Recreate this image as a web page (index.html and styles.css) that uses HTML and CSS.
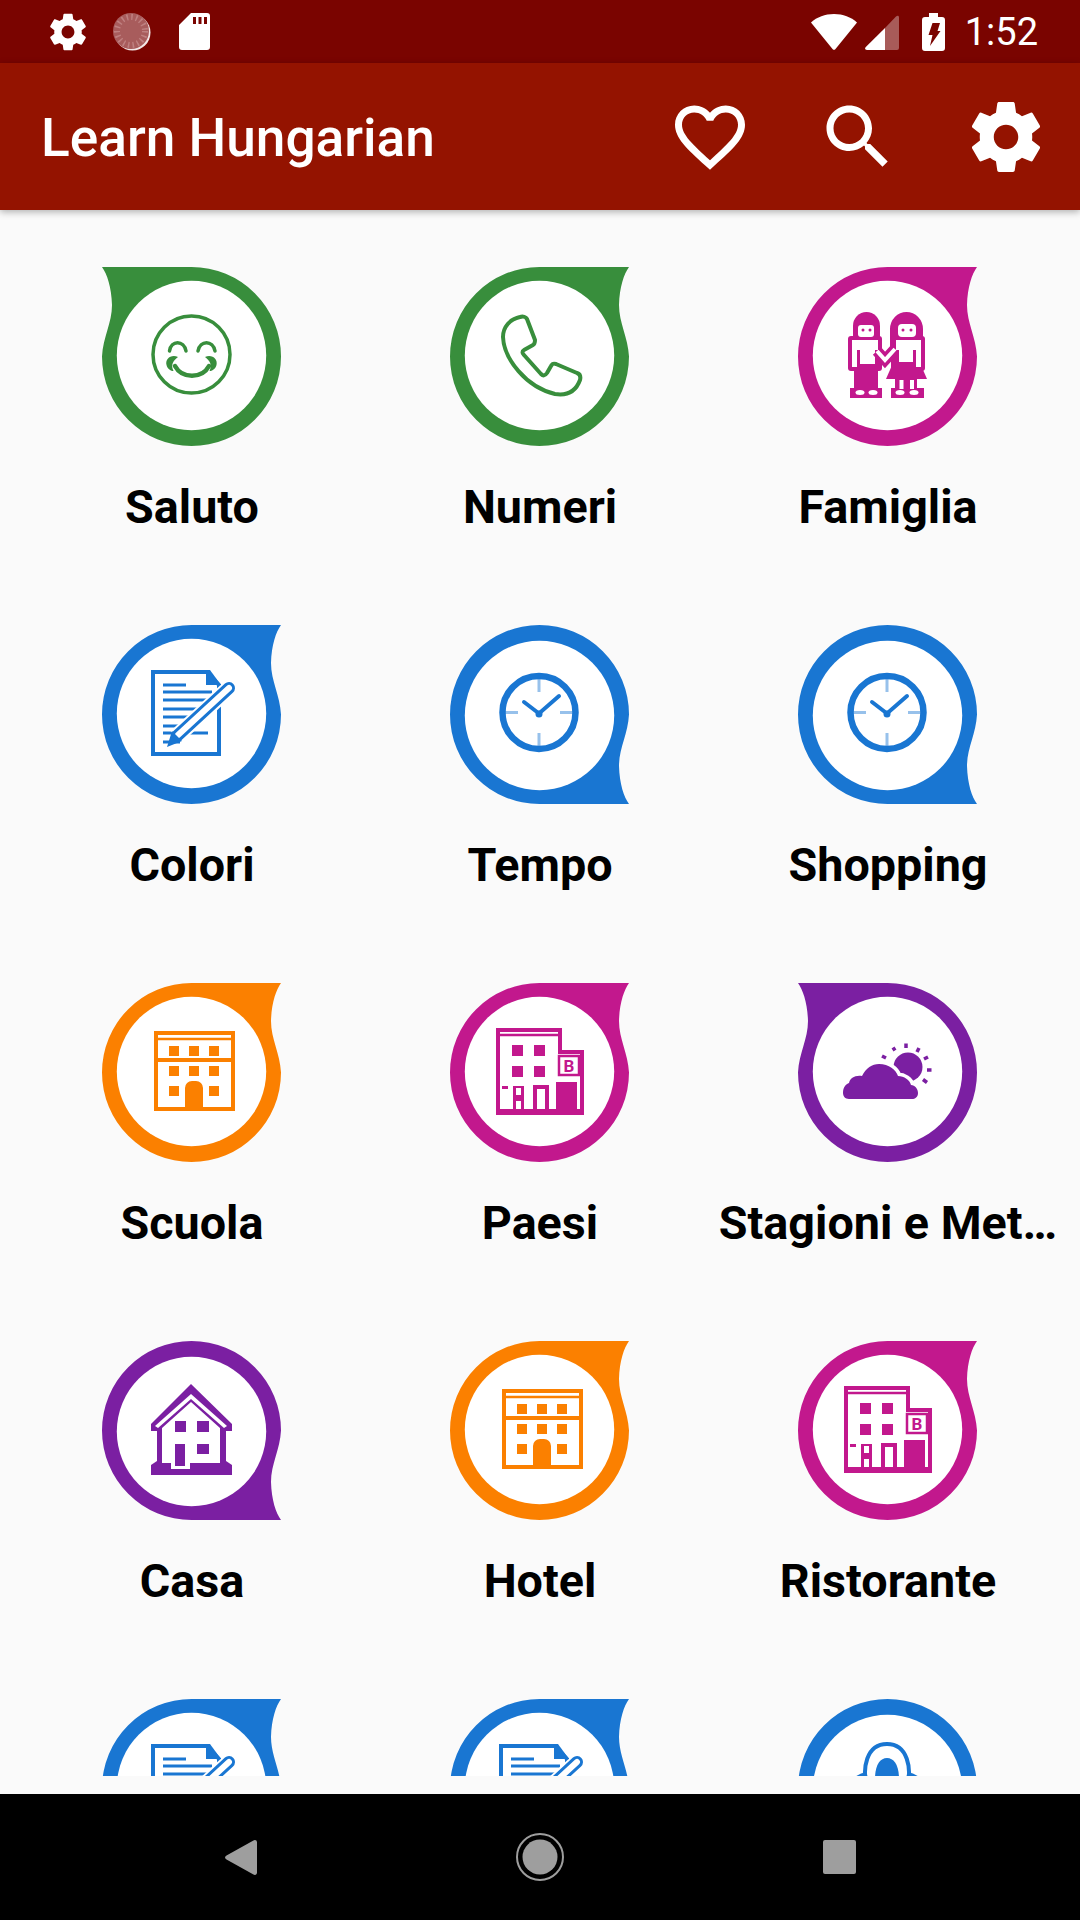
FILE: index.html
```html
<!DOCTYPE html>
<html lang="en">
<head>
    <meta charset="UTF-8">
    <meta name="viewport" content="width=device-width, initial-scale=1.0">
    <title>Learn Hungarian</title>
    <link rel="stylesheet" href="styles.css">
</head>
<body>
    <!-- shared shapes for the tiles -->
    <svg class="sprite" xmlns="http://www.w3.org/2000/svg">
        <defs>
            <g id="drop-tr">
                <path fill="currentColor" d="M89.5 0H179C174 7 169.5 20 169 38C169 56 178 70 179 89.5A89.5 89.5 0 1 1 89.5 0Z"/>
                <circle cx="89.5" cy="88.5" r="74.7" fill="#fff"/>
            </g>
            <use id="drop-tl" href="#drop-tr" transform="matrix(-1 0 0 1 179 0)"/>
            <use id="drop-br" href="#drop-tr" transform="matrix(1 0 0 -1 0 179)"/>

            <g id="g-smile" fill="none" stroke="currentColor" stroke-width="3.5" stroke-linecap="round">
                <circle cx="89.5" cy="87.5" r="38.5"/>
                <path d="M67.500 84C69 73 82 73 84 84M96 84C98 73 111 73 113 84"/>
                <path stroke-width="4.500" d="M73 99C80 112 100 112 107 99"/>
                <path fill="currentColor" stroke="none" d="M76 90C69 87 63 92 64.500 98C65.500 102 69 104 71.500 104C68.500 98 71 94 76 90ZM103 90C110 87 116 92 114.500 98C113.500 102 110 104 107.500 104C110.500 98 108 94 103 90Z"/>
            </g>

            <path id="g-phone" fill="none" stroke="currentColor" stroke-width="4" stroke-linejoin="round" d="M70 50C60 52 53 60 53 70C54 92 76 120 105 127C118 129 126 124 130 113C131 109 130 107 127 106L106 97C103 96 102 97 101 99L97 106C95 109 93 109 91 107L74 88C72 86 72 84 74 83L83 78C85 77 85 75 85 73L77 52C76 50 73 49 70 50Z"/>

            <g id="g-family">
                <g fill="currentColor">
                    <path d="M55 72V59A13.5 14 0 0 1 82 59V72Z"/>
                    <path d="M92 82V62A16.5 17 0 0 1 125 62V82Z"/>
                    <rect x="50" y="69" width="34" height="35" rx="3"/>
                    <rect x="93" y="69" width="34" height="35" rx="3"/>
                    <rect x="56" y="98" width="24" height="24"/>
                    <path d="M95 96H122L129 112H88Z"/>
                    <rect x="97" y="110" width="22" height="12"/>
                    <rect x="52" y="121" width="32" height="10"/>
                    <rect x="93" y="121" width="33" height="10"/>
                </g>
                <g fill="#fff">
                    <rect x="60" y="58" width="16" height="12" rx="3"/>
                    <rect x="100" y="57" width="18" height="13" rx="4"/>
                    <path d="M54 73H80V83H77V97H62V83H59V100H54Z"/>
                    <path d="M98 73H123V100H118V83H115V95H101V83H98Z"/>
                    <rect x="101.5" y="113" width="4" height="9"/>
                    <rect x="112" y="113" width="4" height="9"/>
                    <ellipse cx="62" cy="125.5" rx="4.5" ry="2.5"/>
                    <ellipse cx="75" cy="125.5" rx="4.5" ry="2.5"/>
                    <ellipse cx="102" cy="125.5" rx="4.5" ry="2.5"/>
                    <ellipse cx="116" cy="125.5" rx="4.5" ry="2.5"/>
                </g>
                <g fill="currentColor">
                    <circle cx="65" cy="63" r="1.5"/>
                    <circle cx="72" cy="63" r="1.5"/>
                    <circle cx="105" cy="63" r="1.5"/>
                    <circle cx="113" cy="63" r="1.5"/>
                </g>
                <path fill="none" stroke="currentColor" stroke-width="11" d="M79 84L87 93L97 82"/>
                <path fill="none" stroke="#fff" stroke-width="4" d="M79 84L87 93L97 82"/>
            </g>

            <g id="g-note">
                <path fill="#fff" stroke="currentColor" stroke-width="4" d="M51 47H105L117 60V129H51Z"/>
                <path fill="currentColor" d="M104 45H108L119 60H104Z"/>
                <path fill="none" stroke="currentColor" stroke-width="3" d="M61 60H84M61 67H110M61 75H110M61 84H105M61 92H100M61 101H96M61 108H106M61 117H78"/>
                <path fill="none" stroke="#fff" stroke-width="16" d="M74 112L124 66"/>
                <path fill="none" stroke="currentColor" stroke-width="12" stroke-linecap="round" d="M75 111L127 63"/>
                <path fill="none" stroke="#fff" stroke-width="6" stroke-linecap="round" d="M76 110L127 63"/>
                <path fill="currentColor" d="M65 122L70 106L80 116Z"/>
            </g>

            <g id="g-clock" stroke="currentColor" fill="none">
                <circle cx="89" cy="87.5" r="36.5" stroke-width="6.5"/>
                <path stroke-width="3" opacity="0.45" d="M89 52V67M89 108V122M54 87.5H68M110 87.5H125"/>
                <path stroke-width="4" stroke-linecap="round" d="M74 77L89 88.5L109 71"/>
                <circle cx="89" cy="89" r="3.5" fill="currentColor" stroke="none"/>
            </g>

            <g id="g-school">
                <rect x="54" y="50" width="77" height="76" fill="none" stroke="currentColor" stroke-width="4"/>
                <path fill="none" stroke="currentColor" d="M52 56H133" stroke-width="2.5"/>
                <path fill="none" stroke="currentColor" d="M52 77H133" stroke-width="4"/>
                <path fill="currentColor" d="M67 63H77V73H67ZM87 63H97V73H87ZM107 63H117V73H107ZM67 83H77V93H67ZM87 83H97V93H87ZM107 83H117V93H107ZM67 103H77V113H67ZM107 103H117V113H107ZM83 128V105A7 7 0 0 1 90 98H94A7 7 0 0 1 101 105V128Z"/>
            </g>

            <g id="g-hotel">
                <path fill="none" stroke="currentColor" stroke-width="4" d="M48 130V47H110V69H132V130Z"/>
                <path fill="none" stroke="currentColor" stroke-width="2.5" d="M47 52H110"/>
                <path fill="currentColor" d="M62 62H73V73H62ZM84 62H95V73H84ZM62 83H73V94H62ZM84 83H95V94H84ZM106 99H127V126H106ZM46 126H134V131H46Z"/>
                <rect x="109" y="73" width="20" height="19" fill="#fff" stroke="currentColor" stroke-width="2.5"/>
                <text class="sign" x="119" y="88.5">B</text>
                <rect x="85" y="104" width="12" height="24" fill="#fff" stroke="currentColor" stroke-width="4"/>
                <path fill="currentColor" d="M52 103H58V106H52ZM63 127V103H74V127H71V118H66V127Z"/>
                <path fill="#fff" d="M66 105H71V112H66Z"/>
            </g>

            <g id="g-cloud" fill="currentColor">
                <circle cx="110" cy="84" r="14.5"/>
                <path stroke="#fff" stroke-width="7" paint-order="stroke" d="M51 116C47 116 45 113 45 110C45 104 48 101 51 100C52 95 57 92 64 93C68 85 74 81 81 81C91 81 98 87 100 93C106 93 112 97 113 102C117 102 120 106 120 110C120 114 117 116 114 116Z"/>
                <path fill="none" stroke="currentColor" stroke-width="3.5" d="M84 73L88 75M95 64.500L97 67.500M108 60.500V65M121 65L119 69M130 74L126 76M133.500 87H129M129 99.500L125 96.500"/>
            </g>

            <g id="g-house" fill="currentColor">
                <path d="M89 43L130 83V90H124V120L130 124V134H49V124L55 120V90H49V83Z"/>
                <path fill="#fff" d="M89 53L125 85L122 87L89 58L56 87L53 85Z"/>
                <path fill="#fff" d="M89 61L118 87V122H88V128H69V122H60V87Z"/>
                <path d="M73 80H84V91H73ZM95 80H107V91H95ZM95 103H107V113H95ZM73 103H83V125H73Z"/>
            </g>

            <g id="g-bell">
                <path fill="none" stroke="currentColor" stroke-width="4" d="M69 88C64 70 68 45 89 45C110 45 114 70 109 88"/>
                <path fill="currentColor" d="M77 80C77 66 82 59 89 59C96 59 101 66 101 80Z"/>
                <path fill="none" stroke="currentColor" stroke-width="4" d="M54 84C58 78 64 76 69 75M124 84C120 78 114 76 109 75"/>
            </g>
        </defs>
    </svg>

    <div class="status-bar">
        <div class="status-left">
            <svg class="st-gear" viewBox="0 0 24 24"><path d="M19.43 12.98c.04-.32.07-.64.07-.98s-.03-.66-.07-.98l2.11-1.65c.19-.15.24-.42.12-.64l-2-3.46c-.12-.22-.39-.3-.61-.22l-2.49 1c-.52-.4-1.08-.73-1.69-.98l-.38-2.65C14.46 2.18 14.25 2 14 2h-4c-.25 0-.46.18-.49.42l-.38 2.65c-.61.25-1.17.59-1.69.98l-2.49-1c-.23-.09-.49 0-.61.22l-2 3.46c-.13.22-.07.49.12.64l2.11 1.65c-.04.32-.07.65-.07.98s.03.66.07.98l-2.11 1.65c-.19.15-.24.42-.12.64l2 3.46c.12.22.39.3.61.22l2.49-1c.52.4 1.08.73 1.69.98l.38 2.65c.03.24.24.42.49.42h4c.25 0 .46-.18.49-.42l.38-2.65c.61-.25 1.17-.59 1.69-.98l2.49 1c.23.09.49 0 .61-.22l2-3.46c.12-.22.07-.49-.12-.64l-2.11-1.65zM12 15.5c-1.93 0-3.5-1.57-3.5-3.5s1.57-3.5 3.5-3.5 3.5 1.57 3.5 3.5-1.57 3.5-3.5 3.5z"/></svg>
            <svg class="st-spin" viewBox="0 0 38 38">
                <circle cx="19.5" cy="19.5" r="18" fill="#fff" opacity="0.9"/>
                <circle cx="18" cy="18" r="18" fill="#a85c5c"/>
                <circle cx="18" cy="18" r="14" fill="none" stroke="#bf8080" stroke-width="6" stroke-dasharray="1.5 3.2"/>
            </svg>
            <svg class="st-sd" viewBox="0 0 31 37"><path d="M12 0H28A3 3 0 0 1 31 3V34A3 3 0 0 1 28 37H3A3 3 0 0 1 0 34V12ZM14 4V11H17V4ZM19.5 4V11H22.5V4ZM25 4V11H28V4Z" fill-rule="evenodd"/></svg>
        </div>
        <div class="status-right">
            <svg class="st-wifi" viewBox="0 0 46 36"><path d="M23 0C32 0 40 3 46 8.5L24.5 35A2 2 0 0 1 21.5 35L0 8.5C6 3 14 0 23 0Z"/></svg>
            <svg class="st-signal" viewBox="0 0 34 35">
                <path opacity="0.35" d="M20 35V13L31 1.5C32.5 0 34 .5 34 2.5V33A2 2 0 0 1 32 35Z"/>
                <path d="M20 13V35H2C0 35-.5 33.5.8 32Z"/>
            </svg>
            <svg class="st-batt" viewBox="0 0 23 38">
                <path d="M7 0H16V4H20A3 3 0 0 1 23 7V35A3 3 0 0 1 20 38H3A3 3 0 0 1 0 35V7A3 3 0 0 1 3 4H7Z"/>
                <path fill="#7a0400" d="M10.5 10H18L15.5 18H18.5L8 33L10.5 22H6.5Z"/>
            </svg>
            <span class="clock">1:52</span>
        </div>
    </div>

    <div class="app-bar">
        <h1 class="title">Learn Hungarian</h1>
        <div class="actions">
            <svg class="action" viewBox="0 0 24 24"><path d="M16.5 3c-1.74 0-3.41.81-4.5 2.09C10.91 3.81 9.24 3 7.5 3 4.42 3 2 5.42 2 8.5c0 3.78 3.4 6.86 8.55 11.54L12 21.35l1.45-1.32C18.6 15.36 22 12.28 22 8.5 22 5.42 19.58 3 16.5 3zm-4.4 15.55l-.1.1-.1-.1C7.14 14.24 4 11.39 4 8.5 4 6.5 5.5 5 7.5 5c1.54 0 3.04.99 3.57 2.36h1.87C13.46 5.99 14.96 5 16.5 5c2 0 3.5 1.5 3.5 3.5 0 2.89-3.14 5.74-7.9 10.05z"/></svg>
            <svg class="action" viewBox="0 0 24 24"><path d="M15.5 14h-.79l-.28-.27C15.41 12.59 16 11.11 16 9.5 16 5.91 13.09 3 9.5 3S3 5.91 3 9.5 5.91 16 9.5 16c1.61 0 3.09-.59 4.23-1.57l.27.28v.79l5 4.99L20.49 19l-4.99-5zm-6 0C7.01 14 5 11.99 5 9.5S7.01 5 9.5 5 14 7.01 14 9.5 11.99 14 9.5 14z"/></svg>
            <svg class="action" viewBox="0 0 24 24"><path d="M19.43 12.98c.04-.32.07-.64.07-.98s-.03-.66-.07-.98l2.11-1.65c.19-.15.24-.42.12-.64l-2-3.46c-.12-.22-.39-.3-.61-.22l-2.49 1c-.52-.4-1.08-.73-1.69-.98l-.38-2.65C14.46 2.18 14.25 2 14 2h-4c-.25 0-.46.18-.49.42l-.38 2.65c-.61.25-1.17.59-1.69.98l-2.49-1c-.23-.09-.49 0-.61.22l-2 3.46c-.13.22-.07.49.12.64l2.11 1.65c-.04.32-.07.65-.07.98s.03.66.07.98l-2.11 1.65c-.19.15-.24.42-.12.64l2 3.46c.12.22.39.3.61.22l2.49-1c.52.4 1.08.73 1.69.98l.38 2.65c.03.24.24.42.49.42h4c.25 0 .46-.18.49-.42l.38-2.65c.61-.25 1.17-.59 1.69-.98l2.49 1c.23.09.49 0 .61-.22l2-3.46c.12-.22.07-.49-.12-.64l-2.11-1.65zM12 15.5c-1.93 0-3.5-1.57-3.5-3.5s1.57-3.5 3.5-3.5 3.5 1.57 3.5 3.5-1.57 3.5-3.5 3.5z"/></svg>
        </div>
    </div>

    <div class="content">
        <div class="grid">
            <div class="tile green">
                <svg class="tile-icon" viewBox="0 0 180 180"><use href="#drop-tl"/><use href="#g-smile"/></svg>
                <p class="tile-name">Saluto</p>
            </div>
            <div class="tile green">
                <svg class="tile-icon" viewBox="0 0 180 180"><use href="#drop-tr"/><use href="#g-phone"/></svg>
                <p class="tile-name">Numeri</p>
            </div>
            <div class="tile pink">
                <svg class="tile-icon" viewBox="0 0 180 180"><use href="#drop-tr"/><use href="#g-family"/></svg>
                <p class="tile-name">Famiglia</p>
            </div>

            <div class="tile blue">
                <svg class="tile-icon" viewBox="0 0 180 180"><use href="#drop-tr"/><use href="#g-note"/></svg>
                <p class="tile-name">Colori</p>
            </div>
            <div class="tile blue">
                <svg class="tile-icon" viewBox="0 0 180 180"><use href="#drop-br"/><use href="#g-clock"/></svg>
                <p class="tile-name">Tempo</p>
            </div>
            <div class="tile blue">
                <svg class="tile-icon" viewBox="0 0 180 180"><use href="#drop-br"/><use href="#g-clock"/></svg>
                <p class="tile-name">Shopping</p>
            </div>

            <div class="tile orange">
                <svg class="tile-icon" viewBox="0 0 180 180"><use href="#drop-tr"/><use href="#g-school"/></svg>
                <p class="tile-name">Scuola</p>
            </div>
            <div class="tile pink">
                <svg class="tile-icon" viewBox="0 0 180 180"><use href="#drop-tr"/><use href="#g-hotel"/></svg>
                <p class="tile-name">Paesi</p>
            </div>
            <div class="tile purple">
                <svg class="tile-icon" viewBox="0 0 180 180"><use href="#drop-tl"/><use href="#g-cloud"/></svg>
                <p class="tile-name">Stagioni e Met…</p>
            </div>

            <div class="tile purple">
                <svg class="tile-icon" viewBox="0 0 180 180"><use href="#drop-br"/><use href="#g-house"/></svg>
                <p class="tile-name">Casa</p>
            </div>
            <div class="tile orange">
                <svg class="tile-icon" viewBox="0 0 180 180"><use href="#drop-tr"/><use href="#g-school"/></svg>
                <p class="tile-name">Hotel</p>
            </div>
            <div class="tile pink">
                <svg class="tile-icon" viewBox="0 0 180 180"><use href="#drop-tr"/><use href="#g-hotel"/></svg>
                <p class="tile-name">Ristorante</p>
            </div>

            <div class="tile blue">
                <svg class="tile-icon" viewBox="0 0 180 180"><use href="#drop-tr"/><use href="#g-note"/></svg>
            </div>
            <div class="tile blue">
                <svg class="tile-icon" viewBox="0 0 180 180"><use href="#drop-tr"/><use href="#g-note"/></svg>
            </div>
            <div class="tile blue">
                <svg class="tile-icon" viewBox="0 0 180 180"><use href="#drop-br"/><use href="#g-bell"/></svg>
            </div>
        </div>
    </div>

    <div class="nav-bar">
        <svg class="nav-back" viewBox="0 0 32 35"><path d="M28 .8C30 -.6 32 .2 32 2.5V32.5C32 34.8 30 35.6 28 34.2L1.5 19.5C-.5 18.3 -.5 16.7 1.5 15.5Z"/></svg>
        <svg class="nav-home" viewBox="0 0 48 48">
            <circle cx="24" cy="24" r="23" fill="none" stroke="#9e9e9e" stroke-width="2"/>
            <circle cx="24" cy="24" r="17.5"/>
        </svg>
        <svg class="nav-recent" viewBox="0 0 33 34"><rect width="33" height="34" rx="2"/></svg>
    </div>
</body>
</html>
```

FILE: styles.css
```css
* {
    box-sizing: border-box;
}
body {
    margin: 0;
    width: 1080px;
    height: 1920px;
    background: #fafafa;
    font-family: Roboto, "Liberation Sans", sans-serif;
    overflow: hidden;
}
.sprite {
    display: none;
}

/* status bar */
.status-bar {
    height: 63px;
    background: #7a0400;
    display: flex;
    justify-content: space-between;
    align-items: center;
    color: #fff;
    fill: #fff;
    padding: 0 42px 0 46px;
}
.status-left,
.status-right {
    display: flex;
    align-items: center;
}
.st-gear {
    width: 44px;
    height: 44px;
}
.st-spin {
    width: 38px;
    height: 38px;
    margin-left: 23px;
}
.st-sd {
    width: 31px;
    height: 37px;
    margin-left: 28px;
}
.st-wifi {
    width: 46px;
    height: 36px;
}
.st-signal {
    width: 34px;
    height: 35px;
    margin-left: 8px;
    margin-top: 2px;
}
.st-batt {
    width: 23px;
    height: 38px;
    margin-left: 23px;
}
.clock {
    font-size: 38px;
    margin-left: 20px;
    line-height: 42px;
}

/* app bar */
.app-bar {
    position: relative;
    height: 147px;
    background: #941300;
    box-shadow: 0 2px 7px rgba(0, 0, 0, 0.3);
    display: flex;
    justify-content: space-between;
    align-items: center;
    padding: 0 32px 0 41px;
}
.title {
    margin: 2px 0 0;
    color: #fff;
    font-size: 53.2px;
    font-weight: 500;
}
.actions {
    display: flex;
    gap: 64px;
}
.action {
    width: 84px;
    height: 84px;
    fill: #fff;
    display: block;
}

/* tiles */
.content {
    height: 1584px;
}
.grid {
    height: 1566px;
    overflow: hidden;
    padding: 57px 17px 0 18px;
    display: grid;
    grid-template-columns: repeat(3, 348px);
    grid-auto-rows: 358px;
}
.tile {
    display: flex;
    flex-direction: column;
    align-items: center;
    min-width: 0;
}
.tile-icon {
    width: 180px;
    height: 180px;
    display: block;
    flex: none;
}
.tile-name {
    margin: 33px 0 0;
    font-size: 46.7px;
    line-height: 54px;
    font-weight: 700;
    color: #000;
    white-space: nowrap;
}
.sign {
    font-family: Roboto, sans-serif;
    font-size: 17px;
    font-weight: 700;
    text-anchor: middle;
    fill: currentColor;
}
.green { color: #388e3c; }
.pink { color: #c2188d; }
.blue { color: #1976d2; }
.orange { color: #fb8000; }
.purple { color: #7b1fa2; }

/* bottom nav */
.nav-bar {
    height: 126px;
    background: #000;
    fill: #9e9e9e;
    display: grid;
    grid-template-columns: repeat(3, 299px);
    justify-content: center;
    justify-items: center;
    align-items: center;
}
.nav-back {
    width: 32px;
    height: 35px;
}
.nav-home {
    width: 48px;
    height: 48px;
}
.nav-recent {
    width: 33px;
    height: 34px;
}
```
